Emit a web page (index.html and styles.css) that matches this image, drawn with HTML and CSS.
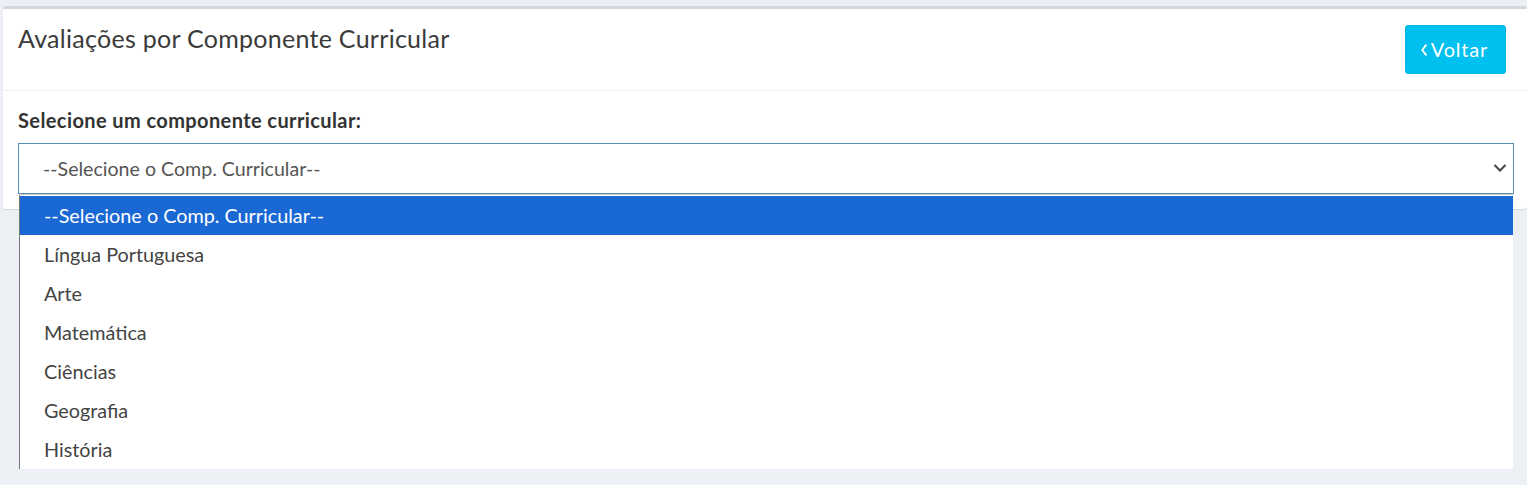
FILE: index.html
```html
<!DOCTYPE html>
<html lang="pt-BR">
<head>
<meta charset="utf-8">
<title>Avaliações por Componente Curricular</title>
<link rel="stylesheet" href="styles.css">
</head>
<body>
<div class="box">
  <div class="box-header">
    <h3 class="box-title">Avaliações por Componente Curricular</h3>
    <button class="btn-info" type="button">
      <svg class="chev" viewBox="0 0 6 12" width="6" height="12"><path d="M5 1.2 L1.2 6 L5 10.8" fill="none" stroke="#fff" stroke-width="1.9" stroke-linecap="round" stroke-linejoin="round"/></svg>Voltar
    </button>
  </div>
  <div class="box-body">
    <label class="field-label">Selecione um componente curricular:</label>
    <div class="select-wrap">
      <div class="select-control">
        <span class="select-value">--Selecione o Comp. Curricular--</span>
        <svg class="select-arrow" viewBox="0 0 14 10" width="14" height="10"><path d="M1.5 2 L7 7.5 L12.5 2" fill="none" stroke="#444" stroke-width="2"/></svg>
      </div>
      <ul class="dropdown">
        <li class="opt selected">--Selecione o Comp. Curricular--</li>
        <li class="opt">Língua Portuguesa</li>
        <li class="opt">Arte</li>
        <li class="opt">Matemática</li>
        <li class="opt">Ciências</li>
        <li class="opt">Geografia</li>
        <li class="opt">História</li>
      </ul>
    </div>
  </div>
</div>
</body>
</html>
```
FILE: styles.css
```css
* { box-sizing: border-box; }
html, body { margin: 0; }
body {
  background: #ecf0f5;
  font-family: Lato, "Open Sans", sans-serif;
  padding: 6px 0 0 3px;
  height: 485px;
  overflow: hidden;
}
.box {
  background: #fff;
  border-top: 3px solid #d2d6de;
  border-radius: 3px;
  box-shadow: 0 1px 1px rgba(0,0,0,0.1);
}
.box-header {
  display: flex;
  justify-content: space-between;
  align-items: flex-start;
  height: 82px;
  padding: 16px 21px 0 15px;
  border-bottom: 1px solid #f0f0f0;
}
.box-title {
  margin: -1px 0 0;
  font-weight: 400;
  font-size: 25px;
  letter-spacing: 0.28px;
  line-height: 28px;
  color: #3a3a3a;
}
.btn-info {
  width: 101px;
  height: 49px;
  background: #00c0ef;
  border: 1px solid #00b5e0;
  border-radius: 3px;
  color: #fff;
  font-family: inherit;
  font-size: 20px;
  letter-spacing: 0.8px;
  display: flex;
  align-items: center;
  justify-content: center;
  gap: 4px;
  padding: 0 2px 1px 0;
}
.chev { display: block; margin-top: 1px; }
.box-body {
  padding: 16px 13px 15px 15px;
}
.field-label {
  display: block;
  font-weight: 700;
  font-size: 20px;
  letter-spacing: 0.4px;
  line-height: 26px;
  color: #333;
  margin-bottom: 10px;
}
.select-wrap { position: relative; }
.select-control {
  height: 51px;
  border: 1px solid #5b8db2;
  display: flex;
  align-items: center;
  justify-content: space-between;
  padding: 0 6px 0 24px;
  font-size: 19.6px;
  color: #555;
}
.select-arrow { display: block; margin-bottom: 2px; }
.dropdown {
  position: absolute;
  top: 52px;
  left: 1px;
  right: 1px;
  margin: 0;
  padding: 1px 0 0;
  list-style: none;
  background: #fff;
  border-left: 1px solid #767676;
  box-shadow: 0 -1px 0 #c8c8c8;
  z-index: 10;
}
.opt {
  height: 39px;
  line-height: 39px;
  padding-left: 24px;
  font-size: 19.8px;
  color: #444;
}
.opt.selected {
  background: #1a68d4;
  color: #fff;
}
```
